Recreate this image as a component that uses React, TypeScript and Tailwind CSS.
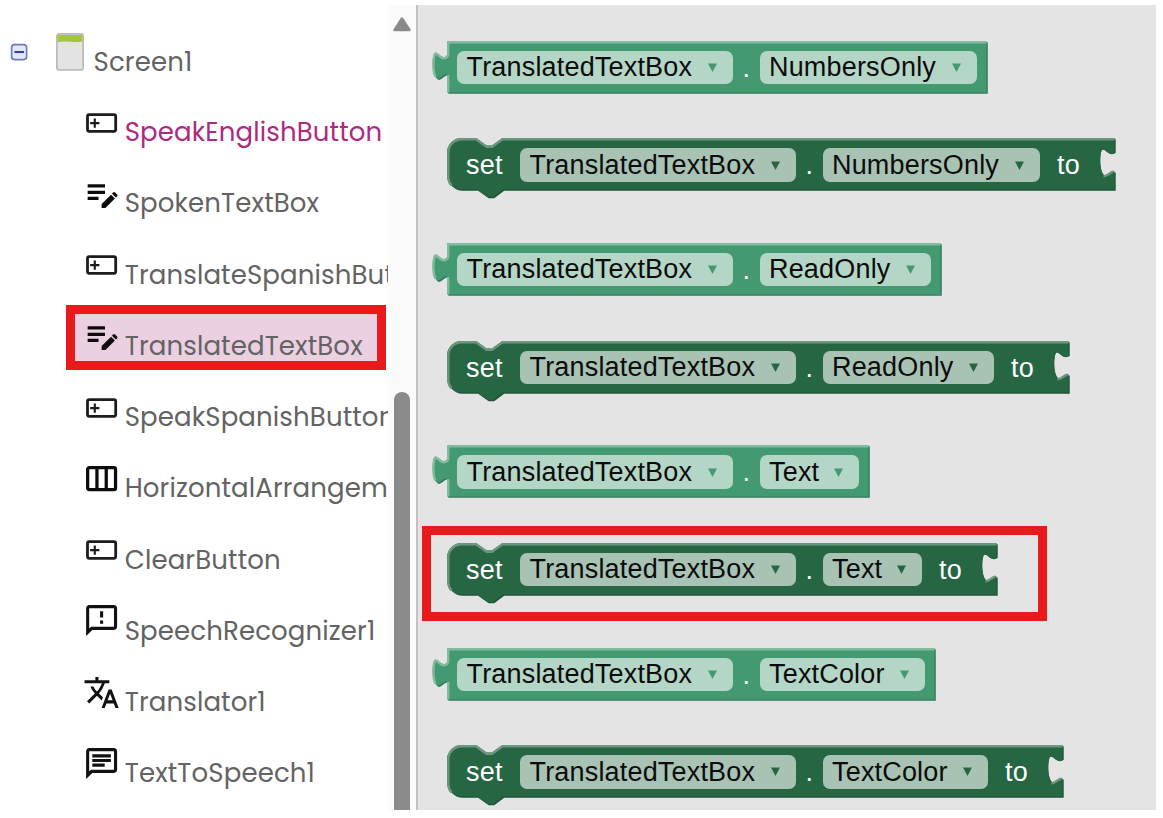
import type { ReactNode } from 'react';
import { MdOutlineFeedback, MdTranslate, MdOutlineChat } from 'react-icons/md';

const ICON = 'w-[37.2px] h-[37.2px] shrink-0 text-[#111]';

function ButtonIcon() {
  return (
    <svg viewBox="0 0 24 24" className={ICON} fill="none" stroke="#1c1c1c">
      <rect x="2.9" y="6.9" width="18.2" height="10.7" rx="1.1" strokeWidth="1.8" />
      <path d="M7.6 9.300v6M4.600 12.300h6" strokeWidth="1.400" />
    </svg>
  );
}

function ColumnsIcon() {
  return (
    <svg viewBox="0 0 24 24" className={ICON} fill="none" stroke="#0c0c0c" strokeWidth="2.1">
      <rect x="3" y="4.900" width="18" height="14.200" rx="1" />
      <path d="M9 5v14M15 5v14" />
    </svg>
  );
}

function EditIcon() {
  return (
    <svg viewBox="0 0 24 24" className={ICON} fill="#0c0c0c">
      <path d="M3 6h11.200v2.100H3zM3 10.100h11.200v2.100H3zM3 14.100h7v2.100H3z" />
      <path d="M12 21.300v-2.600l6.100-6 2.500 2.500-6.100 6.100z" />
      <path d="M18.700 12.100l.8-.8q.6-.5 1.200 0l1.300 1.300q.5.6 0 1.200l-.8.8z" />
    </svg>
  );
}

type Item = { label: string; icon: ReactNode; color?: string; selected?: boolean };

const items: Item[] = [
  { label: 'SpeakEnglishButton', icon: <ButtonIcon />, color: 'text-[#ad2a80]' },
  { label: 'SpokenTextBox', icon: <EditIcon /> },
  { label: 'TranslateSpanishButton', icon: <ButtonIcon /> },
  { label: 'TranslatedTextBox', icon: <EditIcon />, selected: true },
  { label: 'SpeakSpanishButton', icon: <ButtonIcon /> },
  { label: 'HorizontalArrangement1', icon: <ColumnsIcon /> },
  { label: 'ClearButton', icon: <ButtonIcon /> },
  { label: 'SpeechRecognizer1', icon: <MdOutlineFeedback className={ICON} /> },
  { label: 'Translator1', icon: <MdTranslate className={ICON} /> },
  { label: 'TextToSpeech1', icon: <MdOutlineChat className={ICON} /> },
];

function TreeItem({ item }: { item: Item }) {
  return (
    <div className="relative flex h-[71.25px] shrink-0 items-start pl-[83px]">
      {item.selected && (
        <div className="absolute left-[66px] top-[-12.7px] h-[65px] w-[320px] border-[9px] border-[#e81a1c] bg-[#ebd0e2]" />
      )}
      <div className="relative flex">
        {item.icon}
        <span className={`ml-[4.5px] mt-[10.5px] whitespace-nowrap leading-[37px] ${item.color ?? 'text-[#636363]'}`}>
          {item.label}
        </span>
      </div>
    </div>
  );
}

function Sidebar() {
  return (
    <div className="w-[387.5px] shrink-0 overflow-hidden font-['Poppins','Inter',sans-serif] text-[26px] tracking-[0.13px]">
      <div className="flex h-[98.5px] items-start pl-[10px]">
        <svg className="mt-[38px] h-[18px] w-[18px] shrink-0" viewBox="0 0 18 18">
          <rect x="1.6" y="1.6" width="15" height="15" rx="3" fill="#e3e8f6" stroke="#7079c4" strokeWidth="1.7" />
          <path d="M4.5 9h9.5" stroke="#3434d2" strokeWidth="2" />
        </svg>
        <svg className="ml-[28px] mt-[28px] h-[38px] w-[28px] shrink-0" viewBox="0 0 28 38">
          <rect x="0.9" y="0.9" width="26.2" height="36" rx="2.2" fill="#e3e3e3" stroke="#bcbcbc" strokeWidth="1.8" />
          <path d="M1.8 2h24.4v6.5q-6 1-12 .3T1.8 9z" fill="#a4c639" />
        </svg>
        <span className="ml-[9.5px] mt-[39px] leading-[37px] text-[#636363]">Screen1</span>
      </div>
      {items.map((it) => (
        <TreeItem key={it.label} item={it} />
      ))}
    </div>
  );
}

function Scrollbar() {
  return (
    <div className="flex w-[28.5px] shrink-0 flex-col items-center bg-[#fbfbfb]">
      <svg className="mt-[11px] h-[16px] w-[20px] shrink-0" viewBox="0 0 20 16">
        <path d="M10 2.5L17.5 14h-15z" fill="#8b8b8b" stroke="#8b8b8b" strokeWidth="2.5" strokeLinejoin="round" />
      </svg>
      <div className="mt-[359.5px] w-[16.5px] flex-1 rounded-t-full bg-[#8b8b8b]" />
    </div>
  );
}

function Field({ text, light, width }: { text: string; light: boolean; width: number }) {
  return (
    <div
      className={`flex h-[33.5px] shrink-0 items-center justify-between rounded-[7px] pl-[9.5px] pr-[16px] ${light ? 'bg-[#b4d6c6]' : 'bg-[#a8c2b4]'}`}
      style={{ width }}
    >
      <span className="whitespace-nowrap pt-[1px] leading-[33.5px] tracking-[0.18px] text-[#0c0c0c]">{text}</span>
      <svg className="h-[9px] w-[9px] shrink-0" viewBox="0 0 9 9">
        <path d="M0 .5h9L4.5 9z" fill={light ? '#439970' : '#266643'} />
      </svg>
    </div>
  );
}

/* Puzzle connector outline, drawn bottom to top along the edge at x. */
const connector = (x: number) =>
  `C${x - 3} 32 ${x - 7} 38.500 ${x - 10} 37.500C${x - 14.500} 35 ${x - 15.500} 19 ${x - 12.800} 12.300C${x - 11} 9.500 ${x - 8} 14.500 ${x - 4.500} 15.800Q${x - 1} 17 ${x} 14`;

function GetterShape({ w }: { w: number }) {
  const d = `M0 0H${w}V51.500H0V33.500${connector(0)}Z`;
  return (
    <svg className="absolute left-[-18px] top-[-2px] h-[60px]" style={{ width: w + 24 }} viewBox={`-18 -2 ${w + 24} 60`}>
      <path d={d} transform="translate(1.3 1.3)" fill="#367a5a" />
      <path d={d} fill="#439970" />
      <path
        d={`M1.200 51V34M-11.500 35.500C-14.200 31 -14.300 18 -12 13C-10 11.500 -8 16 -4.500 17Q0 18 1.200 14V1.200H${w}`}
        fill="none"
        stroke="#82bb9f"
        strokeWidth="2.400"
      />
    </svg>
  );
}

function SetterShape({ w }: { w: number }) {
  const right = `V14Q${w - 1} 17 ${w - 4.5} 15.800C${w - 8} 14.500 ${w - 11} 9.500 ${w - 12.8} 12.300C${w - 15.5} 19 ${w - 14.5} 35 ${w - 10} 37.500C${w - 7} 38.500 ${w - 3} 32 ${w} 33.500`;
  const d = `M14.500 0H29L39.500 7.500H45L55.500 0H${w}${right}V51.500H56L46 59H40.500L30 51.500H14.500A14.500 14.500 0 0 1 0 37V14.500A14.500 14.500 0 0 1 14.500 0Z`;
  return (
    <svg className="absolute left-[-2px] top-[-2px] h-[66px]" style={{ width: w + 6 }} viewBox={`-2 -2 ${w + 6} 66`}>
      <path d={d} transform="translate(1.2 1.3)" fill="#1f5236" />
      <path
        d={`M${w + 3} 14Q${w - 1} 17 ${w - 4.5} 15.800C${w - 8} 14.500 ${w - 11} 9.500 ${w - 12.8} 12.300C${w - 15.5} 19 ${w - 14.5} 35 ${w - 10} 37.500C${w - 7} 38.500 ${w - 3} 32 ${w + 3} 33.500Z`}
        fill="#e4e4e4"
      />
      <path d={d} fill="#266643" />
      <path
        d={`M4.500 47.500A14 14 0 0 1 1.300 37V14.500A13.300 13.300 0 0 1 14.500 1.300H29L39.500 8.800H45L55.500 1.300H${w}M${w - 11} 38.200C${w - 7} 38.500 ${w - 4} 33.500 ${w - 1} 33.800`}
        fill="none"
        stroke="#6b9680"
        strokeWidth="2.400"
      />
    </svg>
  );
}

type Prop = { name: string; field: number };

const props: Prop[] = [
  { name: 'NumbersOnly', field: 217.5 },
  { name: 'ReadOnly', field: 171.5 },
  { name: 'Text', field: 99.5 },
  { name: 'TextColor', field: 165.5 },
];

function Dot() {
  return <span className="w-[26.5px] shrink-0 pt-[1px] text-center leading-[33.5px] text-white">.</span>;
}

function BlockPair({ prop }: { prop: Prop }) {
  return (
    <div className="h-[202.3px] shrink-0 pl-[29px]">
      <div className="relative h-[97.6px]">
        <GetterShape w={prop.field + 322} />
        <div className="relative flex pl-[10px] pt-[10px]">
          <Field text="TranslatedTextBox" light width={276} />
          <Dot />
          <Field text={prop.name} light width={prop.field} />
        </div>
      </div>
      <div className="relative">
        {prop.name === 'Text' && (
          <div className="absolute left-[-25px] top-[-16.5px] h-[94.5px] w-[624.5px] border-[9px] border-[#e81a1c]" />
        )}
        <SetterShape w={prop.field + 450} />
        <div className="relative flex pl-[19px] pt-[10px] leading-[33.5px]">
          <span className="w-[54px] shrink-0 pt-[1px] tracking-[0.2px] text-white">set</span>
          <Field text="TranslatedTextBox" light={false} width={276} />
          <Dot />
          <Field text={prop.name} light={false} width={prop.field} />
          <span className="ml-[17px] pt-[1px] tracking-[0.2px] text-white">to</span>
        </div>
      </div>
    </div>
  );
}

export default function App() {
  return (
    <div className="h-[818px] w-[1163px] overflow-hidden bg-white pt-[5px]">
      <div className="flex h-[805px] w-[1156px] overflow-hidden">
        <Sidebar />
        <Scrollbar />
        <div className="flex flex-1 flex-col overflow-hidden border-l-2 border-[#c2c2c2] bg-[#e4e4e4] pt-[35.7px] font-['Liberation_Sans',Arial,sans-serif] text-[27px]">
          {props.map((p) => (
            <BlockPair key={p.name} prop={p} />
          ))}
        </div>
      </div>
    </div>
  );
}
